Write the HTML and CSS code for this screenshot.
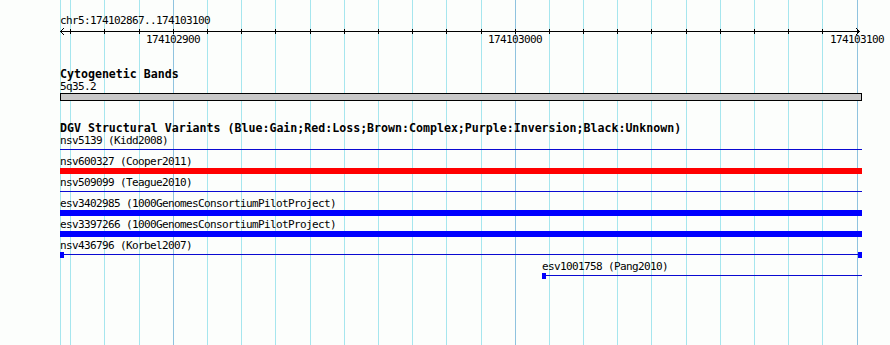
FILE: index.html
```html
<!DOCTYPE html>
<html lang="en">
<head>
    <meta charset="UTF-8">
    <meta name="viewport" content="width=device-width, initial-scale=1.0">
    <title>chr5:174102867..174103100</title>
    <link rel="stylesheet" href="styles.css">
</head>
<body>
    <div class="panel">
        <!-- grid: one line every 10 bp, darker every 100 bp -->
        <svg class="grid" width="890" height="345" shape-rendering="crispEdges">
            <g class="minor">
                <rect x="60" width="1" height="345"/><rect x="70" width="1" height="345"/>
                <rect x="104" width="1" height="345"/><rect x="139" width="1" height="345"/>
                <rect x="207" width="1" height="345"/><rect x="241" width="1" height="345"/>
                <rect x="275" width="1" height="345"/><rect x="310" width="1" height="345"/>
                <rect x="344" width="1" height="345"/><rect x="378" width="1" height="345"/>
                <rect x="412" width="1" height="345"/><rect x="446" width="1" height="345"/>
                <rect x="481" width="1" height="345"/><rect x="549" width="1" height="345"/>
                <rect x="583" width="1" height="345"/><rect x="617" width="1" height="345"/>
                <rect x="651" width="1" height="345"/><rect x="686" width="1" height="345"/>
                <rect x="720" width="1" height="345"/><rect x="754" width="1" height="345"/>
                <rect x="788" width="1" height="345"/><rect x="822" width="1" height="345"/>
            </g>
            <g class="major">
                <rect x="173" width="1" height="345"/><rect x="515" width="1" height="345"/>
                <rect x="857" width="1" height="345"/>
            </g>
        </svg>

        <div class="tracks">
            <div class="ruler">
                <div class="ruler-title">chr5:174102867..174103100</div>
                <svg class="axis" width="890" height="7">
                    <path class="axis-line" shape-rendering="crispEdges" d="M60 4.5H860
                        M70.5 2V7M104.5 2V7M139.5 2V7M173.5 2V7M207.5 2V7M241.5 2V7
                        M275.5 2V7M310.5 2V7M344.5 2V7M378.5 2V7M412.5 2V7M446.5 2V7
                        M481.5 2V7M515.5 2V7M549.5 2V7M583.5 2V7M617.5 2V7M651.5 2V7
                        M686.5 2V7M720.5 2V7M754.5 2V7M788.5 2V7M822.5 2V7M857.5 2V7"/>
                    <polyline class="axis-line" points="64,1 60.5,4.5 64,8"/>
                    <polyline class="axis-line" points="856,1 859.5,4.5 856,8"/>
                </svg>
                <div class="ruler-labels">
                    <span class="tick-label" style="left:146px">174102900</span>
                    <span class="tick-label" style="left:488px">174103000</span>
                    <span class="tick-label" style="left:830px">174103100</span>
                </div>
            </div>

            <section class="track">
                <h2 class="track-title">Cytogenetic Bands</h2>
                <div class="feature">
                    <div class="feature-label">5q35.2</div>
                    <div class="band"></div>
                </div>
            </section>

            <section class="track">
                <h2 class="track-title">DGV Structural Variants (Blue:Gain;Red:Loss;Brown:Complex;Purple:Inversion;Black:Unknown)</h2>
                <div class="feature">
                    <div class="feature-label">nsv5139 (Kidd2008)</div>
                    <div class="glyph"><div class="stroke"></div></div>
                </div>
                <div class="feature">
                    <div class="feature-label">nsv600327 (Cooper2011)</div>
                    <div class="glyph bar loss"></div>
                </div>
                <div class="feature">
                    <div class="feature-label">nsv509099 (Teague2010)</div>
                    <div class="glyph"><div class="stroke"></div></div>
                </div>
                <div class="feature">
                    <div class="feature-label">esv3402985 (1000GenomesConsortiumPilotProject)</div>
                    <div class="glyph bar gain"></div>
                </div>
                <div class="feature">
                    <div class="feature-label">esv3397266 (1000GenomesConsortiumPilotProject)</div>
                    <div class="glyph bar gain"></div>
                </div>
                <div class="feature">
                    <div class="feature-label">nsv436796 (Korbel2007)</div>
                    <div class="glyph"><div class="cap"></div><div class="stroke"></div><div class="cap"></div></div>
                </div>
                <div class="feature" style="margin-left:542px;width:320px">
                    <div class="feature-label">esv1001758 (Pang2010)</div>
                    <div class="glyph"><div class="cap"></div><div class="stroke"></div></div>
                </div>
            </section>
        </div>
    </div>
</body>
</html>
```

FILE: styles.css
```css
body {
    margin: 0;
    background: #fcfefc;
    color: #000000;
    font-family: "DejaVu Sans Mono", monospace;
    font-size: 11px;
}

.panel {
    position: relative;
    width: 890px;
    height: 345px;
    overflow: hidden;
}

.grid {
    position: absolute;
    top: 0;
    left: 0;
}

.grid .minor {
    fill: #a6e6ee;
}

.grid .major {
    fill: #8fc3df;
}

.tracks {
    position: relative;
}

/* ruler */
.ruler {
    padding-top: 15px;
}

.ruler-title {
    padding-left: 60px;
    line-height: 12px;
    letter-spacing: -0.62px;
}

.axis {
    display: block;
    overflow: visible;
}

.axis-line {
    fill: none;
    stroke: #000000;
    stroke-width: 1;
}

.ruler-labels {
    position: relative;
    height: 13px;
    line-height: 12px;
    letter-spacing: -0.62px;
}

.tick-label {
    position: absolute;
    top: 0;
    white-space: nowrap;
}

/* tracks */
.track {
    padding-top: 21px;
}

.track-title {
    margin: 0;
    padding-left: 60px;
    font-size: 11.6px;
    font-weight: bold;
    line-height: 13px;
    white-space: nowrap;
}

.feature {
    margin-left: 60px;
    width: 802px;
}

.feature-label {
    line-height: 12px;
    letter-spacing: -0.62px;
    white-space: nowrap;
}

.band {
    height: 8px;
    box-sizing: border-box;
    border: 1px solid #000000;
    background: #c8c8c8;
}

.glyph {
    display: flex;
    height: 6px;
    margin-bottom: 3px;
}

.stroke {
    flex: 1;
    height: 1px;
    margin-top: 2px;
    background: #0a0ad2;
}

.cap {
    width: 4px;
    height: 6px;
    background: #0000ff;
}

.bar.loss {
    background: #ff0000;
}

.bar.gain {
    background: #0000ff;
}
```
